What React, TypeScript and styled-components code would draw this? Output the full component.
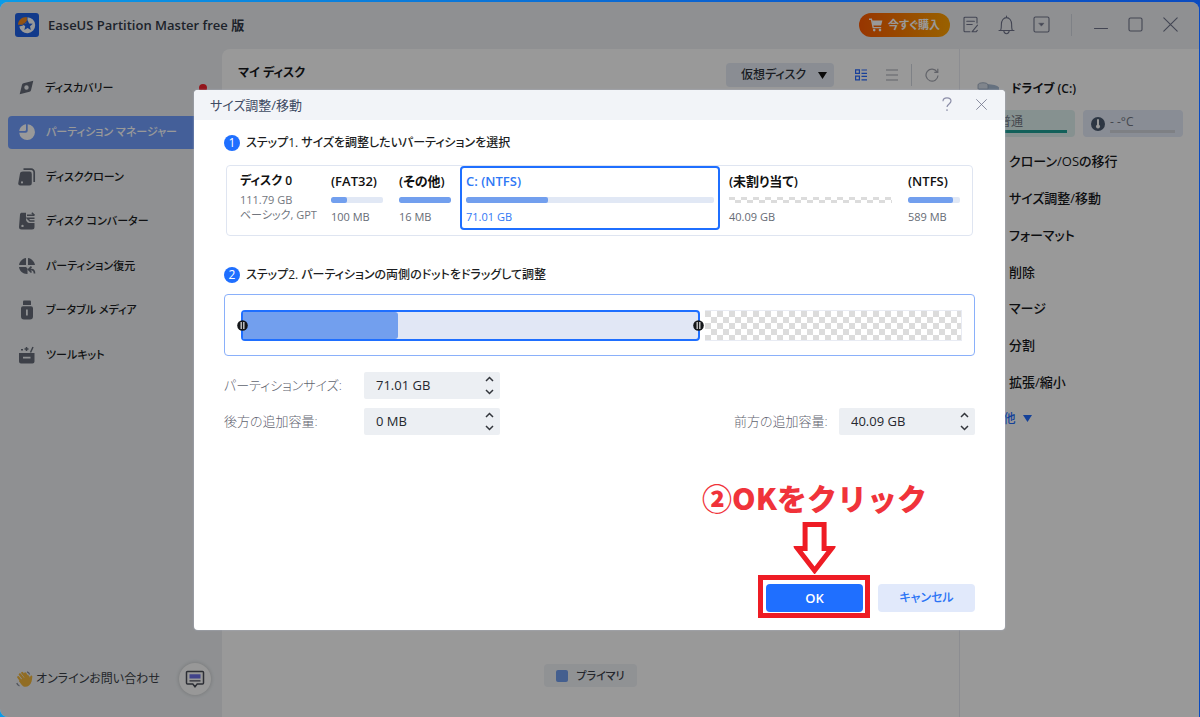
import React from "react";
import styled, { createGlobalStyle, css } from "styled-components";

const GlobalStyle = createGlobalStyle`
  *, *::before, *::after { box-sizing: border-box; }
  html, body, #root { height: 100%; }
  body {
    margin: 0;
    font-family: "Open Sans", "Noto Sans CJK JP", sans-serif;
    font-feature-settings: "palt";
    font-size: 12px;
    line-height: 16px;
    color: #16181c;
  }
  button, input, select { font: inherit; font-feature-settings: inherit; color: inherit; border: 0; padding: 0; margin: 0; background: none; }
  a { color: inherit; text-decoration: none; }
  h1, h2, h3, p { margin: 0; font-size: inherit; font-weight: inherit; }
  svg { display: block; flex: none; }
`;

const Desktop = styled.div`
  min-height: 100%;
  display: flex;
  padding: 2px 1px 0 0;
  background: linear-gradient(90deg, #0a9be8, #0a62d0 60%, #0b4bc0);
`;

const AppWindow = styled.div`
  position: relative;
  flex: 1;
  display: flex;
  flex-direction: column;
  border-radius: 8px 8px 0 8px;
  overflow: hidden;
  background: #eef1f4;
`;

const TitleBar = styled.header`
  display: flex;
  align-items: center;
  height: 47px;
  padding: 0 11px 2px 15px;
`;

const AppName = styled.h1`
  margin-left: 9px;
  flex: 1;
  font-size: 13px;
  font-weight: 600;
  color: #333a48;
`;

const BuyButton = styled.button`
  display: flex;
  align-items: center;
  justify-content: center;
  gap: 5px;
  width: 91px;
  height: 24px;
  margin-right: 12px;
  border-radius: 12px;
  color: #fff;
  font-size: 11px;
  font-weight: 600;
  background: linear-gradient(90deg, #fd5a00, #ffa200);
`;

const IconButton = styled.button<{ $size?: number }>`
  display: flex;
  align-items: center;
  justify-content: center;
  width: ${(p) => p.$size ?? 35}px;
  height: 24px;
  color: #70748a;
`;

const Separator = styled.span<{ $before: number; $after: number }>`
  width: 1px;
  height: 22px;
  margin: 0 ${(p) => p.$after}px 0 ${(p) => p.$before}px;
  background: #d3d8e0;
`;

const Body = styled.div`
  flex: 1;
  display: flex;
`;

const Sidebar = styled.aside`
  width: 222px;
  display: flex;
  flex-direction: column;
  justify-content: space-between;
  padding: 22px 8px;
`;

const Nav = styled.nav`
  display: flex;
  flex-direction: column;
  justify-content: space-between;
  height: 300px;
  font-size: 11px;
  font-weight: 500;
`;

const NavItem = styled.a<{ $active?: boolean }>`
  display: flex;
  align-items: center;
  gap: 10px;
  height: 33px;
  padding: 0 7px 0 10px;
  border-radius: 4px;
  color: #1b1d22;
  svg { color: #666c78; }
  ${(p) =>
    p.$active &&
    css`
      background: #729fff;
      color: #fff;
      svg { color: #fff; }
    `}
`;

const AlertDot = styled.span`
  width: 8px;
  height: 8px;
  margin-left: auto;
  border-radius: 50%;
  background: #f5222d;
`;

const Support = styled.div`
  display: flex;
  align-items: center;
  gap: 3px;
  padding: 0 3px 0 8px;
  font-size: 12px;
  color: #3a3e46;
`;

const ChatButton = styled.button`
  display: flex;
  align-items: center;
  justify-content: center;
  width: 32px;
  height: 32px;
  margin-left: auto;
  border-radius: 50%;
  background: #fdfdfd;
  box-shadow: 0 0 4px rgba(0, 0, 0, 0.2);
`;

const Main = styled.main`
  flex: 1;
  display: flex;
  flex-direction: column;
  border-radius: 8px 0 0 0;
  background: #fff;
`;

const Toolbar = styled.div`
  display: flex;
  align-items: center;
  height: 24px;
  margin: 14px 12px 0 16px;
`;

const ToolbarTitle = styled.h2`
  flex: 1;
  padding-bottom: 4px;
  font-size: 12px;
  font-weight: 600;
`;

const SelectBox = styled.label`
  position: relative;
  display: flex;
  align-items: center;
  width: 108px;
  height: 24px;
  margin-right: 11px;
  border-radius: 4px;
  background: #e6ecf6;
  font-size: 12px;
  select { appearance: none; width: 100%; height: 100%; padding-left: 15px; outline: 0; font-weight: 500; color: #2e323b; }
  svg { position: absolute; right: 7px; pointer-events: none; }
`;

const LegendTag = styled.div`
  display: flex;
  align-items: center;
  gap: 8px;
  height: 23px;
  margin: auto auto 30px;
  padding: 0 12px;
  border-radius: 4px;
  background: #f1f3f7;
  font-size: 11px;
  font-weight: 500;
  color: #3b404a;
`;

const Swatch = styled.span`
  width: 12px;
  height: 12px;
  border-radius: 2px;
  background: #729fee;
`;

const SidePanel = styled.aside`
  width: 240px;
  padding: 28px 16px 0 15px;
  border-left: 1px solid #e9ecf2;
  background: #fff;
`;

const DriveHeading = styled.h2`
  display: flex;
  align-items: center;
  gap: 10px;
  height: 24px;
  padding-left: 2px;
  font-size: 12px;
  font-weight: 600;
`;

const StatusRow = styled.div`
  display: grid;
  grid-template-columns: 1fr 1fr;
  gap: 8px;
  margin-top: 9px;
`;

const StatusCard = styled.div<{ $tone: "teal" | "blue" }>`
  display: flex;
  align-items: center;
  gap: 5px;
  height: 27px;
  padding: 0 8px;
  border-radius: 4px;
  background: ${(p) => (p.$tone === "teal" ? "#e0f2f1" : "#e4ebf8")};
  color: #737884;
`;

const StatusText = styled.div<{ $bar: string }>`
  flex: 1;
  padding-bottom: 1px;
  border-bottom: 3px solid ${(p) => p.$bar};
  line-height: 15px;
  white-space: nowrap;
`;

const ActionList = styled.ul`
  display: flex;
  flex-direction: column;
  justify-content: space-between;
  height: 274px;
  margin: 16px 0 0;
  padding: 0;
  list-style: none;
  font-size: 13px;
  font-weight: 500;
`;

const Action = styled.a`
  display: block;
  padding-left: 34px;
`;

const MoreAction = styled.a`
  display: flex;
  align-items: center;
  gap: 8px;
  padding-left: 6px;
  font-size: 12px;
  color: #226dff;
`;

const Backdrop = styled.div`
  position: absolute;
  inset: 0;
  display: flex;
  align-items: center;
  justify-content: center;
  background: rgba(0, 0, 0, 0.4);
`;

const Dialog = styled.section`
  display: flex;
  flex-direction: column;
  width: 811px;
  max-width: 90%;
  min-height: 540px;
  border-radius: 4px;
  background: #fff;
  box-shadow: 0 0 2px #aeb6c8;
`;

const DialogHeader = styled.header`
  display: flex;
  align-items: center;
  height: 30px;
  padding: 0 6px 0 16px;
  border-radius: 4px 4px 0 0;
  background: #f2f4f8;
  h2 { flex: 1; font-size: 13px; color: #3e4b63; }
`;

const DialogBody = styled.div`
  flex: 1;
  display: flex;
  flex-direction: column;
  padding: 14px 30px 18px;
`;

const StepTitle = styled.h3`
  display: flex;
  align-items: center;
  gap: 6px;
  height: 18px;
  font-size: 12px;
  font-weight: 500;
  color: #1c1e22;
`;

const StepNumber = styled.span`
  width: 16px;
  height: 16px;
  border-radius: 50%;
  background: #1f6fff;
  color: #fff;
  font-size: 12px;
  line-height: 16px;
  text-align: center;
`;

const DiskMap = styled.div`
  display: flex;
  height: 71px;
  margin: 13px 2px 30px;
  padding-right: 3px;
  border: 1px solid #dfe5f1;
  border-radius: 4px;
`;

const DiskInfo = styled.div`
  width: 97px;
  padding: 6px 0 0 13px;
  font-size: 11px;
  line-height: 15px;
  color: #72767e;
  white-space: nowrap;
  strong { display: block; font-size: 12px; line-height: 17px; font-weight: 600; color: #111; padding-bottom: 3px; }
`;

const Partition = styled.button<{ $width: number; $selected?: boolean; $grow?: boolean }>`
  display: flex;
  flex-direction: column;
  width: ${(p) => p.$width}px;
  flex: ${(p) => (p.$grow ? "1" : "none")};
  height: 64px;
  margin-right: ${(p) => (p.$selected ? 2 : 0)}px;
  padding: ${(p) => (p.$selected ? "4px 4px 0" : "4px 7px 0 5px")};
  border: 2px solid ${(p) => (p.$selected ? "#1f6fff" : "transparent")};
  border-radius: 4px;
  text-align: left;
  white-space: nowrap;
  color: ${(p) => (p.$selected ? "#2f78f5" : "#111")};
  small { font-size: 11px; line-height: 16px; color: ${(p) => (p.$selected ? "#2f78f5" : "#666b75")}; }
`;

const PartitionName = styled.span`
  font-size: 13px;
  line-height: 18px;
  font-weight: 600;
`;

const UsageBar = styled.span`
  display: block;
  width: 100%;
  height: 6px;
  margin: 7px 0 6px;
  border-radius: 2px;
  overflow: hidden;
  background: #e1e8f5;
  span { display: block; height: 100%; border-radius: 2px; background: #729fee; }
`;

const EmptyBar = styled.span`
  display: block;
  width: 100%;
  height: 6px;
  margin: 7px 0 6px;
  background: repeating-conic-gradient(#fff 0 25%, #dcdcdc 0 50%) 0 0 / 12px 6px;
`;

const ResizeTrack = styled.div`
  display: flex;
  gap: 5px;
  height: 62px;
  margin: 10px 0 16px;
  padding: 15px 12px 14px 16px;
  border: 1px solid #8ab0fa;
  border-radius: 4px;
`;

const Allocated = styled.div`
  position: relative;
  flex: 458;
  border: 2px solid #1f6fff;
  border-radius: 4px;
  background: #e1e7f5;
`;

const UsedSpace = styled.div`
  height: 100%;
  border-radius: 1px 3px 3px 1px;
  background: #729fee;
`;

const Handle = styled.button<{ $side: "left" | "right" }>`
  position: absolute;
  top: 8px;
  ${(p) => p.$side}: -6px;
  width: 11px;
  height: 11px;
`;

const FreeSpace = styled.div`
  flex: 258;
  border: 1px solid #e8ebf3;
  border-left: 0;
  background: repeating-conic-gradient(#fff 0 25%, #dcdcdc 0 50%) 0 0 / 12px 12px;
`;

const FieldRow = styled.div`
  display: flex;
  justify-content: space-between;
  margin-bottom: 9px;
`;

const Field = styled.div<{ $wide?: boolean }>`
  display: flex;
  align-items: center;
  label { width: ${(p) => (p.$wide ? 140 : 105)}px; font-size: 13px; font-weight: 300; color: #5f6470; white-space: nowrap; }
`;

const SpinBox = styled.div`
  display: flex;
  align-items: center;
  width: 136px;
  height: 27px;
  padding: 0 6px 0 12px;
  border-radius: 2px;
  background: #eceff3;
  input { flex: 1; min-width: 0; outline: 0; font-size: 13px; color: #25282e; }
`;

const SpinArrows = styled.div`
  display: flex;
  flex-direction: column;
  gap: 7px;
  color: #33363c;
  button { display: block; }
`;

const Footer = styled.footer`
  display: flex;
  justify-content: flex-end;
  gap: 15px;
  margin-top: auto;
`;

const DialogButton = styled.button<{ $primary?: boolean }>`
  width: 97px;
  height: 28px;
  border-radius: 4px;
  font-size: ${(p) => (p.$primary ? 13 : 12)}px;
  font-weight: ${(p) => (p.$primary ? 600 : 500)};
  background: ${(p) => (p.$primary ? "#1f6fff" : "#e1e9fb")};
  color: ${(p) => (p.$primary ? "#fff" : "#2a73f5")};
`;

const Callout = styled.div`
  position: relative;
`;

const CalloutFrame = styled.span`
  position: absolute;
  inset: -9px -7px -6px -8px;
  border: 5px solid #ee1c24;
  pointer-events: none;
`;

const CalloutNote = styled.div`
  position: absolute;
  bottom: 38px;
  left: 50%;
  display: flex;
  flex-direction: column;
  align-items: center;
  gap: 4px;
  transform: translateX(-50%);
  font-family: "Noto Sans CJK JP", sans-serif;
  font-feature-settings: normal;
  font-size: 30px;
  line-height: 42px;
  font-weight: 900;
  color: #f0333a;
  white-space: nowrap;
`;

const LogoIcon = () => (
  <svg width="24" height="24" viewBox="0 0 24 24">
    <rect width="24" height="24" rx="3" fill="#1f62e8" />
    <path d="M12.500 4.200a8 8 0 1 1-8.200 9.300L8 12.500l4.500-3.500z" fill="#fff" />
    <path d="M3 11.800C3 7.500 6.500 4 11.800 4v3.800L8.500 11.800z" fill="#f58a1f" />
    <path d="m12.600 7 1.500 3.400 3.700.4-2.800 2.500.8 3.600-3.200-1.800-3.200 1.800.8-3.600-2.800-2.500 3.700-.4z" fill="#1f62e8" />
  </svg>
);

const CartIcon = () => (
  <svg width="14" height="14" viewBox="0 0 14 14" fill="none" stroke="currentColor" strokeWidth="1.4">
    <path d="M0 1.2h2.4l1.8 8.4h8" />
    <path d="M3 2.5h10.4l-1.3 5H4z" fill="currentColor" stroke="none" />
    <circle cx="5.2" cy="12.1" r="1.3" fill="currentColor" stroke="none" />
    <circle cx="11" cy="12.1" r="1.3" fill="currentColor" stroke="none" />
  </svg>
);

const line = { fill: "none", stroke: "currentColor", strokeWidth: 1.1, strokeLinecap: "round", strokeLinejoin: "round" } as const;

const NoteIcon = () => (
  <svg width="16" height="18" viewBox="0 0 16 18" {...line}>
    <path d="M14 7V2.2a1 1 0 0 0-1-1H2a1 1 0 0 0-1 1v12.6a1 1 0 0 0 1 1h5" />
    <path d="M3.8 5.2h7.6M3.8 8.5h5.4" />
    <path d="M14.5 9.2 9 15.8H13l1.3-1.5" />
  </svg>
);

const BellIcon = () => (
  <svg width="17" height="20" viewBox="0 0 17 20" {...line}>
    <path d="M8.5 1v1.6M1 15.5h15M2.600 15.500c.8-1.500.8-3.300.8-6.300C3.400 5.400 5.600 2.600 8.500 2.600s5.100 2.800 5.100 6.600c0 3 0 4.800.8 6.300M5.800 16.200c.4 1.700 1.400 2.500 2.700 2.500s2.300-.8 2.700-2.500" />
  </svg>
);

const MenuBoxIcon = () => (
  <svg width="17" height="17" viewBox="0 0 17 17" {...line}>
    <rect x="1" y="1" width="15" height="15" rx="1.5" />
    <path d="M6 7.2h5L8.5 10z" fill="currentColor" strokeWidth=".4" />
  </svg>
);

const MinimizeIcon = () => (
  <svg width="14" height="16" viewBox="0 0 14 16" {...line}><path d="M.5 11.500h13" /></svg>
);
const MaximizeIcon = () => (
  <svg width="15" height="15" viewBox="0 0 15 15" {...line}><rect x="1" y="1" width="13" height="13" rx="1.5" /></svg>
);
const CloseIcon = ({ size }: { size: number }) => (
  <svg width={size} height={size} viewBox="0 0 15 15" {...line}><path d="m.8.8 13.400 13.400M14.200.8.800 14.200" /></svg>
);
const HelpIcon = () => (
  <svg width="10" height="15" viewBox="0 0 10 15" fill="none" stroke="#8c8ea8" strokeWidth="1.2">
    <path d="M1 4.200C1 2.200 2.600.9 5 .9s4 1.300 4 3.200c0 2.700-4 3-4 6M5 12.300v1.700" />
  </svg>
);

const CompassIcon = () => (
  <svg width="17" height="17" viewBox="0 0 17 17">
    <path fillRule="evenodd" fill="currentColor" d="M15.300 1.700 13 11.300c-.2.800-.7 1.300-1.500 1.500L1.700 15.300 4 5.700c.2-.8.7-1.300 1.500-1.500zM8.500 6.300a2.200 2.200 0 1 0 0 4.400 2.200 2.200 0 0 0 0-4.400" />
  </svg>
);
const PieIcon = () => (
  <svg width="18" height="18" viewBox="0 0 18 18">
    <path fill="currentColor" d="M9.700 1.200a7.900 7.900 0 1 1-8.500 8.500h6.500a2 2 0 0 0 2-2z" />
    <path fill="currentColor" d="M8 1.200v5.300A1.500 1.500 0 0 1 6.500 8H1.200C1.600 4.500 4.500 1.600 8 1.200" />
  </svg>
);
const CloneIcon = () => (
  <svg width="18" height="18" viewBox="0 0 18 18">
    <path d="M5.500 1.200h7.700a3 3 0 0 1 3 3V14" fill="none" stroke="currentColor" strokeWidth="1.700" />
    <path fillRule="evenodd" fill="currentColor" d="M5 3.600h6A2.500 2.500 0 0 1 13.800 6.100V15a2.500 2.500 0 0 1-2.500 2.500H2.300A2 2 0 0 1 .3 15L1.900 6C2.200 4.400 3.300 3.600 5 3.600M4 13.300a1.100 1.100 0 1 0 0 2.200 1.100 1.100 0 0 0 0-2.200" />
  </svg>
);
const ConvertIcon = () => (
  <svg width="18" height="18" viewBox="0 0 18 18">
    <path fillRule="evenodd" fill="currentColor" d="M4 .8h4v6.500c0 2 1.500 3.700 3.400 3.700H16.500V15a2.500 2.500 0 0 1-2.500 2.500H3.500A2.500 2.500 0 0 1 1 15L2 2.500C2.100 1.300 2.800.8 4 .8M4.500 12.700a1.200 1.200 0 1 0 0 2.400 1.200 1.200 0 0 0 0-2.400" />
    <path d="M9 3.200h7.500M13.800.7l2.700 2.500M16.500 6.300H9.300l2.700 2.700h4.500" fill="none" stroke="currentColor" strokeWidth="1.500" />
  </svg>
);
const RestoreIcon = () => (
  <svg width="18" height="18" viewBox="0 0 18 18">
    <path fill="currentColor" d="M8 1v7H1C1.500 4.500 4.500 1.500 8 1M10 1c3.500.5 6.500 3.500 7 7h-7zM1 10h7l1.500 1.500V17C5 17.200 1.500 14 1 10" />
    <path d="m13.500 9.700-3 2.900 3 2.900M10.700 12.600h2.800c2 0 3 1.600 3 4" fill="none" stroke="currentColor" strokeWidth="1.700" />
  </svg>
);
const UsbIcon = () => (
  <svg width="18" height="20" viewBox="0 0 18 20">
    <path fill="currentColor" d="M6 .5h6a1 1 0 0 1 1 1V5H5V1.500a1 1 0 0 1 1-1" />
    <path fillRule="evenodd" fill="currentColor" d="M5 6.300h8a2 2 0 0 1 2 2v8.200a3 3 0 0 1-3 3H6a3 3 0 0 1-3-3V8.300a2 2 0 0 1 2-2M8 9.500v6h1.800v-6z" />
  </svg>
);
const ToolkitIcon = () => (
  <svg width="18" height="18" viewBox="0 0 18 18">
    <path fillRule="evenodd" fill="currentColor" d="M1 7h15.500v8.500a2 2 0 0 1-2 2H3a2 2 0 0 1-2-2zM5 10.800v1.700h7.500v-1.700z" />
    <path d="M12.500 6.500 15 1M8.500 1v4M6.500 3h4M3 3.800h2" fill="none" stroke="currentColor" strokeWidth="1.500" />
  </svg>
);

const WaveIcon = () => (
  <svg width="17" height="17" viewBox="0 0 17 17">
    <path d="M2.200 6.200 6.600 12M3.800 3.300l5.700 7.200M6.200 1.900l5.400 7M9.200 2.500l4 5.500" stroke="#f2b63c" strokeWidth="2.200" strokeLinecap="round" />
    <path d="m5 8.500 7.500-4.300c1.300 1 1.400 2.400 1.200 3.500l.6-2.400c.5-1.200 2.200-.8 2 .6-.5 3.300-.5 6.200-3.300 8.600-2.400 2-5.300 1.700-7.200-.6L2.800 10z" fill="#f2b63c" />
    <path d="M11 .9c1.500.4 2.200 1.200 2.600 2.600M.8 12c.4 1.500 1.300 2.500 2.700 3" fill="none" stroke="#8b909c" strokeWidth="1.3" />
  </svg>
);
const ChatIcon = () => (
  <svg width="20" height="19" viewBox="0 0 20 19">
    <path d="M2.500 1.500h15a1 1 0 0 1 1 1V13a1 1 0 0 1-1 1h-5.300L10 16.800 7.800 14H2.500a1 1 0 0 1-1-1V2.500a1 1 0 0 1 1-1z" fill="none" stroke="#4a4d58" strokeWidth="1.5" />
    <path d="M4.500 4.200h11v4.300h-11z" fill="#6d70e8" />
    <path d="M4.500 10.900h11" stroke="#4a4d58" strokeWidth="1.2" />
  </svg>
);

const Triangle = ({ color, size }: { color: string; size: number }) => (
  <svg width={size} height={size} viewBox="0 0 10 10"><path d="M0 1h10L5 9z" fill={color} /></svg>
);
const DetailIcon = () => (
  <svg width="12" height="12" viewBox="0 0 12 12" fill="none" stroke="#2a6cff" strokeWidth="1.2">
    <path d="M.6.8h3.800v3.600H.6zM.6 7.200h3.800v3.600H.6zM6.500 1H12M6.500 4.300H12M6.500 7.400H12M6.500 10.800H12" />
  </svg>
);
const ListIcon = () => (
  <svg width="12" height="12" viewBox="0 0 12 12" fill="none" stroke="#a3a6b0" strokeWidth="1.2"><path d="M0 1h12M0 6h12M0 11h12" /></svg>
);
const RefreshIcon = () => (
  <svg width="14" height="14" viewBox="0 0 14 14" fill="none" stroke="#a3a6b0" strokeWidth="1.2"><path d="M12 3.800A6 6 0 1 0 13 7.500M12.800.8v3.500H9.300" /></svg>
);
const DriveIcon = () => (
  <svg width="24" height="14" viewBox="0 0 24 14">
    <path d="M2 4c3-2.500 17-2.500 20 1.500V14H2z" fill="#a9bcd4" />
    <path d="M1 3c0-3 10-3 10 0v4H1z" fill="#d5deea" stroke="#92a1b8" strokeWidth=".8" />
  </svg>
);
const ThermoIcon = () => (
  <svg width="14" height="14" viewBox="0 0 14 14">
    <circle cx="7" cy="7" r="7" fill="#4b5a70" />
    <path d="M7 3v6" stroke="#fff" strokeWidth="2" strokeLinecap="round" />
    <circle cx="7" cy="9.500" r="2" fill="#fff" />
  </svg>
);
const ShieldIcon = () => (
  <svg width="11" height="14" viewBox="0 0 11 14"><path d="M5.500 0 11 2v5c0 3-2 5.500-5.500 7C2 12.500 0 10 0 7V2z" fill="#21a399" /></svg>
);
const Chevron = ({ up }: { up?: boolean }) => (
  <svg width="9" height="6" viewBox="0 0 9 6" fill="none" stroke="currentColor" strokeWidth="1.5">
    <path d={up ? "M1 5l3.500-3.500L8 5" : "M1 1l3.500 3.500L8 1"} />
  </svg>
);
const HandleIcon = () => (
  <svg width="11" height="11" viewBox="0 0 11 11">
    <circle cx="5.500" cy="5.500" r="5.300" fill="#15171a" />
    <path d="M4.200 2v7M6.800 2v7" stroke="#c9c9c9" strokeWidth="1.4" />
  </svg>
);
const ArrowDown = () => (
  <svg width="42" height="52" viewBox="0 0 42 52">
    <path d="M11.500 2.500h19v24H38L21 48.500 4 26.500h7.500z" fill="#fff" stroke="#ee1c24" strokeWidth="5" />
  </svg>
);

const navItems = [
  { label: "ディスカバリー", icon: <CompassIcon />, alert: true },
  { label: "パーティション マネージャー", icon: <PieIcon />, active: true },
  { label: "ディスククローン", icon: <CloneIcon /> },
  { label: "ディスク コンバーター", icon: <ConvertIcon /> },
  { label: "パーティション復元", icon: <RestoreIcon /> },
  { label: "ブータブル メディア", icon: <UsbIcon /> },
  { label: "ツールキット", icon: <ToolkitIcon /> },
];

const actions = ["クローン/OSの移行", "サイズ調整/移動", "フォーマット", "削除", "マージ", "分割", "拡張/縮小"];

const partitions = [
  { name: "(FAT32)", size: "100 MB", width: 68, used: 31 },
  { name: "(その他)", size: "16 MB", width: 68, used: 100 },
  { name: "C: (NTFS)", size: "71.01 GB", width: 260, used: 33, selected: true },
  { name: "(未割り当て)", size: "40.09 GB", width: 179, empty: true, grow: true },
  { name: "(NTFS)", size: "589 MB", width: 68, used: 86 },
];

const SizeField = ({ id, label, value, wide }: { id: string; label: string; value: string; wide?: boolean }) => (
  <Field $wide={wide}>
    <label htmlFor={id}>{label}</label>
    <SpinBox>
      <input id={id} type="text" defaultValue={value} />
      <SpinArrows>
        <button type="button" aria-label="増やす"><Chevron up /></button>
        <button type="button" aria-label="減らす"><Chevron /></button>
      </SpinArrows>
    </SpinBox>
  </Field>
);

export default function App() {
  return (
    <>
      <GlobalStyle />
      <Desktop>
        <AppWindow>
          <TitleBar>
            <LogoIcon />
            <AppName>EaseUS Partition Master free 版</AppName>
            <BuyButton><CartIcon />今すぐ購入</BuyButton>
            <IconButton $size={18} aria-label="メモ"><NoteIcon /></IconButton>
            <IconButton $size={52} aria-label="通知"><BellIcon /></IconButton>
            <IconButton $size={18} aria-label="メニュー"><MenuBoxIcon /></IconButton>
            <Separator $before={21} $after={11} />
            <IconButton aria-label="最小化"><MinimizeIcon /></IconButton>
            <IconButton aria-label="最大化"><MaximizeIcon /></IconButton>
            <IconButton aria-label="閉じる"><CloseIcon size={15} /></IconButton>
          </TitleBar>
          <Body>
            <Sidebar>
              <Nav>
                {navItems.map((item) => (
                  <NavItem key={item.label} href="#" $active={item.active}>
                    {item.icon}
                    {item.label}
                    {item.alert && <AlertDot />}
                  </NavItem>
                ))}
              </Nav>
              <Support>
                <WaveIcon />
                オンラインお問い合わせ
                <ChatButton aria-label="チャット"><ChatIcon /></ChatButton>
              </Support>
            </Sidebar>
            <Main>
              <Toolbar>
                <ToolbarTitle>マイ ディスク</ToolbarTitle>
                <SelectBox>
                  <select aria-label="ディスクの種類" defaultValue="virtual">
                    <option value="virtual">仮想ディスク</option>
                  </select>
                  <Triangle color="#111" size={9} />
                </SelectBox>
                <IconButton $size={31} aria-label="詳細表示"><DetailIcon /></IconButton>
                <IconButton $size={31} aria-label="リスト表示"><ListIcon /></IconButton>
                <Separator $before={4} $after={4} />
                <IconButton $size={31} aria-label="更新"><RefreshIcon /></IconButton>
              </Toolbar>
              <LegendTag><Swatch />プライマリ</LegendTag>
            </Main>
            <SidePanel>
              <DriveHeading><DriveIcon />ドライブ (C:)</DriveHeading>
              <StatusRow>
                <StatusCard $tone="teal"><ShieldIcon /><StatusText $bar="#1fa196">普通</StatusText></StatusCard>
                <StatusCard $tone="blue"><ThermoIcon /><StatusText $bar="#d3d6dd">- -°C</StatusText></StatusCard>
              </StatusRow>
              <ActionList>
                {actions.map((label) => (
                  <li key={label}><Action href="#">{label}</Action></li>
                ))}
                <li><MoreAction href="#">その他<Triangle color="#226dff" size={9} /></MoreAction></li>
              </ActionList>
            </SidePanel>
          </Body>
          <Backdrop>
            <Dialog role="dialog" aria-labelledby="dialog-title">
              <DialogHeader>
                <h2 id="dialog-title">サイズ調整/移動</h2>
                <IconButton aria-label="ヘルプ"><HelpIcon /></IconButton>
                <IconButton aria-label="閉じる"><CloseIcon size={11} /></IconButton>
              </DialogHeader>
              <DialogBody>
                <StepTitle><StepNumber>1</StepNumber>ステップ1. サイズを調整したいパーティションを選択</StepTitle>
                <DiskMap>
                  <DiskInfo><strong>ディスク 0</strong>111.79 GB<br />ベーシック, GPT</DiskInfo>
                  {partitions.map((p) => (
                    <Partition key={p.name} type="button" $width={p.width} $selected={p.selected} $grow={p.grow}>
                      <PartitionName>{p.name}</PartitionName>
                      {p.empty ? <EmptyBar /> : <UsageBar><span style={{ width: `${p.used}%` }} /></UsageBar>}
                      <small>{p.size}</small>
                    </Partition>
                  ))}
                </DiskMap>
                <StepTitle><StepNumber>2</StepNumber>ステップ2. パーティションの両側のドットをドラッグして調整</StepTitle>
                <ResizeTrack>
                  <Allocated>
                    <UsedSpace style={{ width: "34%" }} />
                    <Handle $side="left" type="button" aria-label="左端"><HandleIcon /></Handle>
                    <Handle $side="right" type="button" aria-label="右端"><HandleIcon /></Handle>
                  </Allocated>
                  <FreeSpace />
                </ResizeTrack>
                <FieldRow>
                  <SizeField id="size" label="パーティションサイズ:" value="71.01 GB" wide />
                </FieldRow>
                <FieldRow>
                  <SizeField id="after" label="後方の追加容量:" value="0 MB" wide />
                  <SizeField id="before" label="前方の追加容量:" value="40.09 GB" />
                </FieldRow>
                <Footer>
                  <Callout>
                    <DialogButton $primary type="button">OK</DialogButton>
                    <CalloutFrame />
                    <CalloutNote>②OKをクリック<ArrowDown /></CalloutNote>
                  </Callout>
                  <DialogButton type="button">キャンセル</DialogButton>
                </Footer>
              </DialogBody>
            </Dialog>
          </Backdrop>
        </AppWindow>
      </Desktop>
    </>
  );
}
